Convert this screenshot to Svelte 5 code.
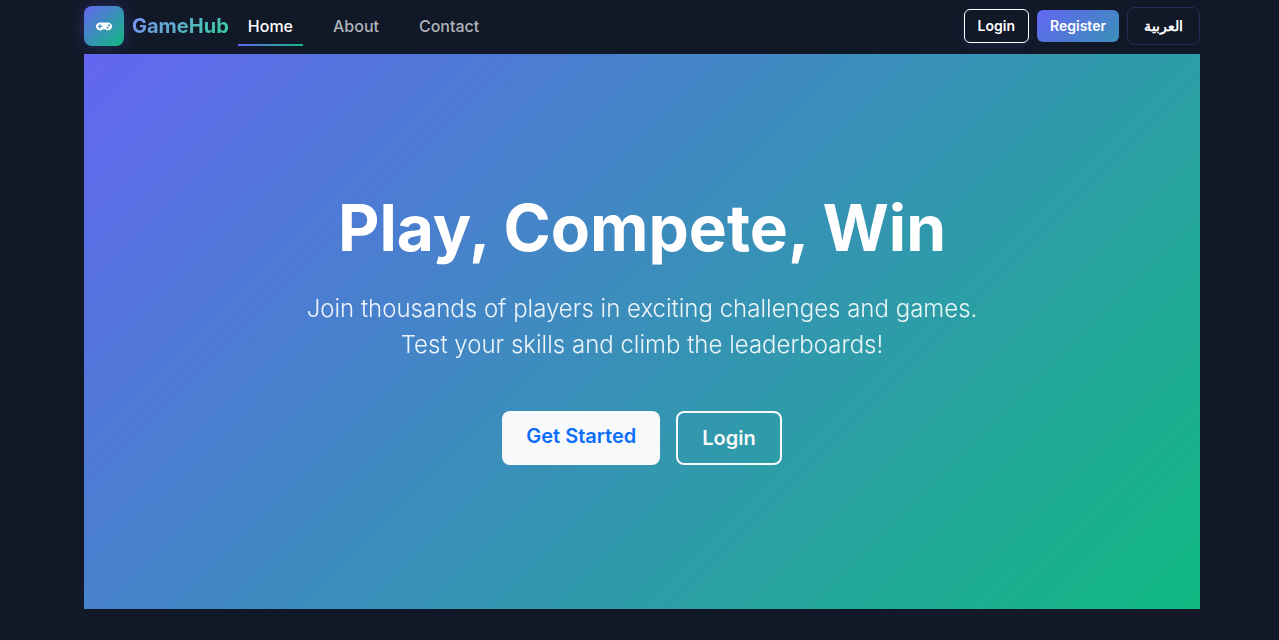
<script>
  const links = [
    { label: 'Home', href: '#home', active: true },
    { label: 'About', href: '#about' },
    { label: 'Contact', href: '#contact' }
  ];
</script>

<div class="page">
  <header class="bar">
    <a class="brand" href="#home">
      <span class="logo">
        <svg viewBox="0 0 640 512" aria-hidden="true">
          <path fill="currentColor" d="M480.07 96H160a160 160 0 1 0 114.24 272h91.5A160 160 0 1 0 480.07 96zM248 268a12 12 0 0 1-12 12h-52v52a12 12 0 0 1-12 12h-24a12 12 0 0 1-12-12v-52H84a12 12 0 0 1-12-12v-24a12 12 0 0 1 12-12h52v-52a12 12 0 0 1 12-12h24a12 12 0 0 1 12 12v52h52a12 12 0 0 1 12 12zm216 76a40 40 0 1 1 40-40 40 40 0 0 1-40 40zm64-96a40 40 0 1 1 40-40 40 40 0 0 1-40 40z" />
        </svg>
      </span>
      <span class="name">GameHub</span>
    </a>
    <nav>
      {#each links as link}
        <a class="link" class:active={link.active} href={link.href}>{link.label}</a>
      {/each}
    </nav>
    <div class="actions">
      <a class="small outline" href="#login">Login</a>
      <a class="small register" href="#register">Register</a>
      <button class="small lang" type="button" lang="ar">العربية</button>
    </div>
  </header>

  <main class="hero">
    <h1>Play, Compete, Win</h1>
    <p>Join thousands of players in exciting challenges and games. Test your skills and climb the leaderboards!</p>
    <div class="cta">
      <a class="large light" href="#register">Get Started</a>
      <a class="large ghost" href="#login">Login</a>
    </div>
  </main>
</div>

<style>
  :global(body) {
    background: #111827;
    font-family: Inter, 'Noto Sans', sans-serif;
  }

  .page {
    padding: 0 79px 31px 84px;
  }

  a {
    text-decoration: none;
  }

  .bar {
    display: flex;
    align-items: center;
    padding: 6px 0 8px;
  }

  .brand {
    display: flex;
    align-items: center;
    gap: 8px;
    margin-right: 9px;
  }

  .logo {
    display: flex;
    align-items: center;
    justify-content: center;
    width: 40px;
    height: 40px;
    border-radius: 8px;
    color: #fff;
    background: linear-gradient(135deg, #6366f1, #10b981);
    box-shadow: 0 0 16px rgba(99, 102, 241, 0.3);
  }

  .logo svg {
    width: 16px;
  }

  .name {
    font-size: 20px;
    font-weight: 700;
    line-height: 30px;
    color: transparent;
    background: linear-gradient(135deg, #818cf8, #34d399);
    background-clip: text;
  }

  nav {
    display: flex;
    gap: 20px;
  }

  .link {
    padding: 9px 10px 7px;
    border-bottom: 2px solid transparent;
    font-size: 16px;
    font-weight: 500;
    line-height: 22px;
    color: #afb3ba;
  }

  .link.active {
    color: #fff;
    border-image: linear-gradient(90deg, #6366f1, #10b981) 1;
  }

  .actions {
    display: flex;
    align-items: center;
    gap: 8px;
    margin-left: auto;
  }

  .small {
    box-sizing: border-box;
    border: 1px solid transparent;
    border-radius: 6px;
    font-family: inherit;
    font-size: 14px;
    font-weight: 600;
    line-height: 20px;
    color: #fff;
    text-align: center;
  }

  .outline {
    padding: 6px 13px;
    border-color: #fff;
    box-shadow: 0 2px 8px rgba(99, 102, 241, 0.15);
  }

  .register {
    padding: 5px 12px;
    background: linear-gradient(135deg, #6366f1, #3a8fb9) border-box;
  }

  .lang {
    padding: 8px 16px;
    border-color: #292d55;
    border-radius: 8px;
    background: transparent;
  }

  .hero {
    display: flex;
    flex-direction: column;
    align-items: center;
    padding: 135px 16px 144px;
    color: #fff;
    text-align: center;
    background: linear-gradient(135deg, #6366f1, #10b981);
  }

  h1 {
    margin: 0 0 25px;
    font-size: 64px;
    font-weight: 700;
    line-height: 77px;
  }

  p {
    max-width: 720px;
    margin: 0 0 48px;
    font-size: 24px;
    font-weight: 300;
    line-height: 36px;
    opacity: 0.9;
  }

  .cta {
    display: flex;
    gap: 16px;
  }

  .large {
    padding: 10px 24px;
    border-radius: 8px;
    font-size: 20px;
    font-weight: 600;
    line-height: 30px;
  }

  .light {
    color: #0d6efd;
    background: #f8f9fa;
  }

  .ghost {
    border: 2px solid #f8f9fa;
    color: #f8f9fa;
  }
</style>
